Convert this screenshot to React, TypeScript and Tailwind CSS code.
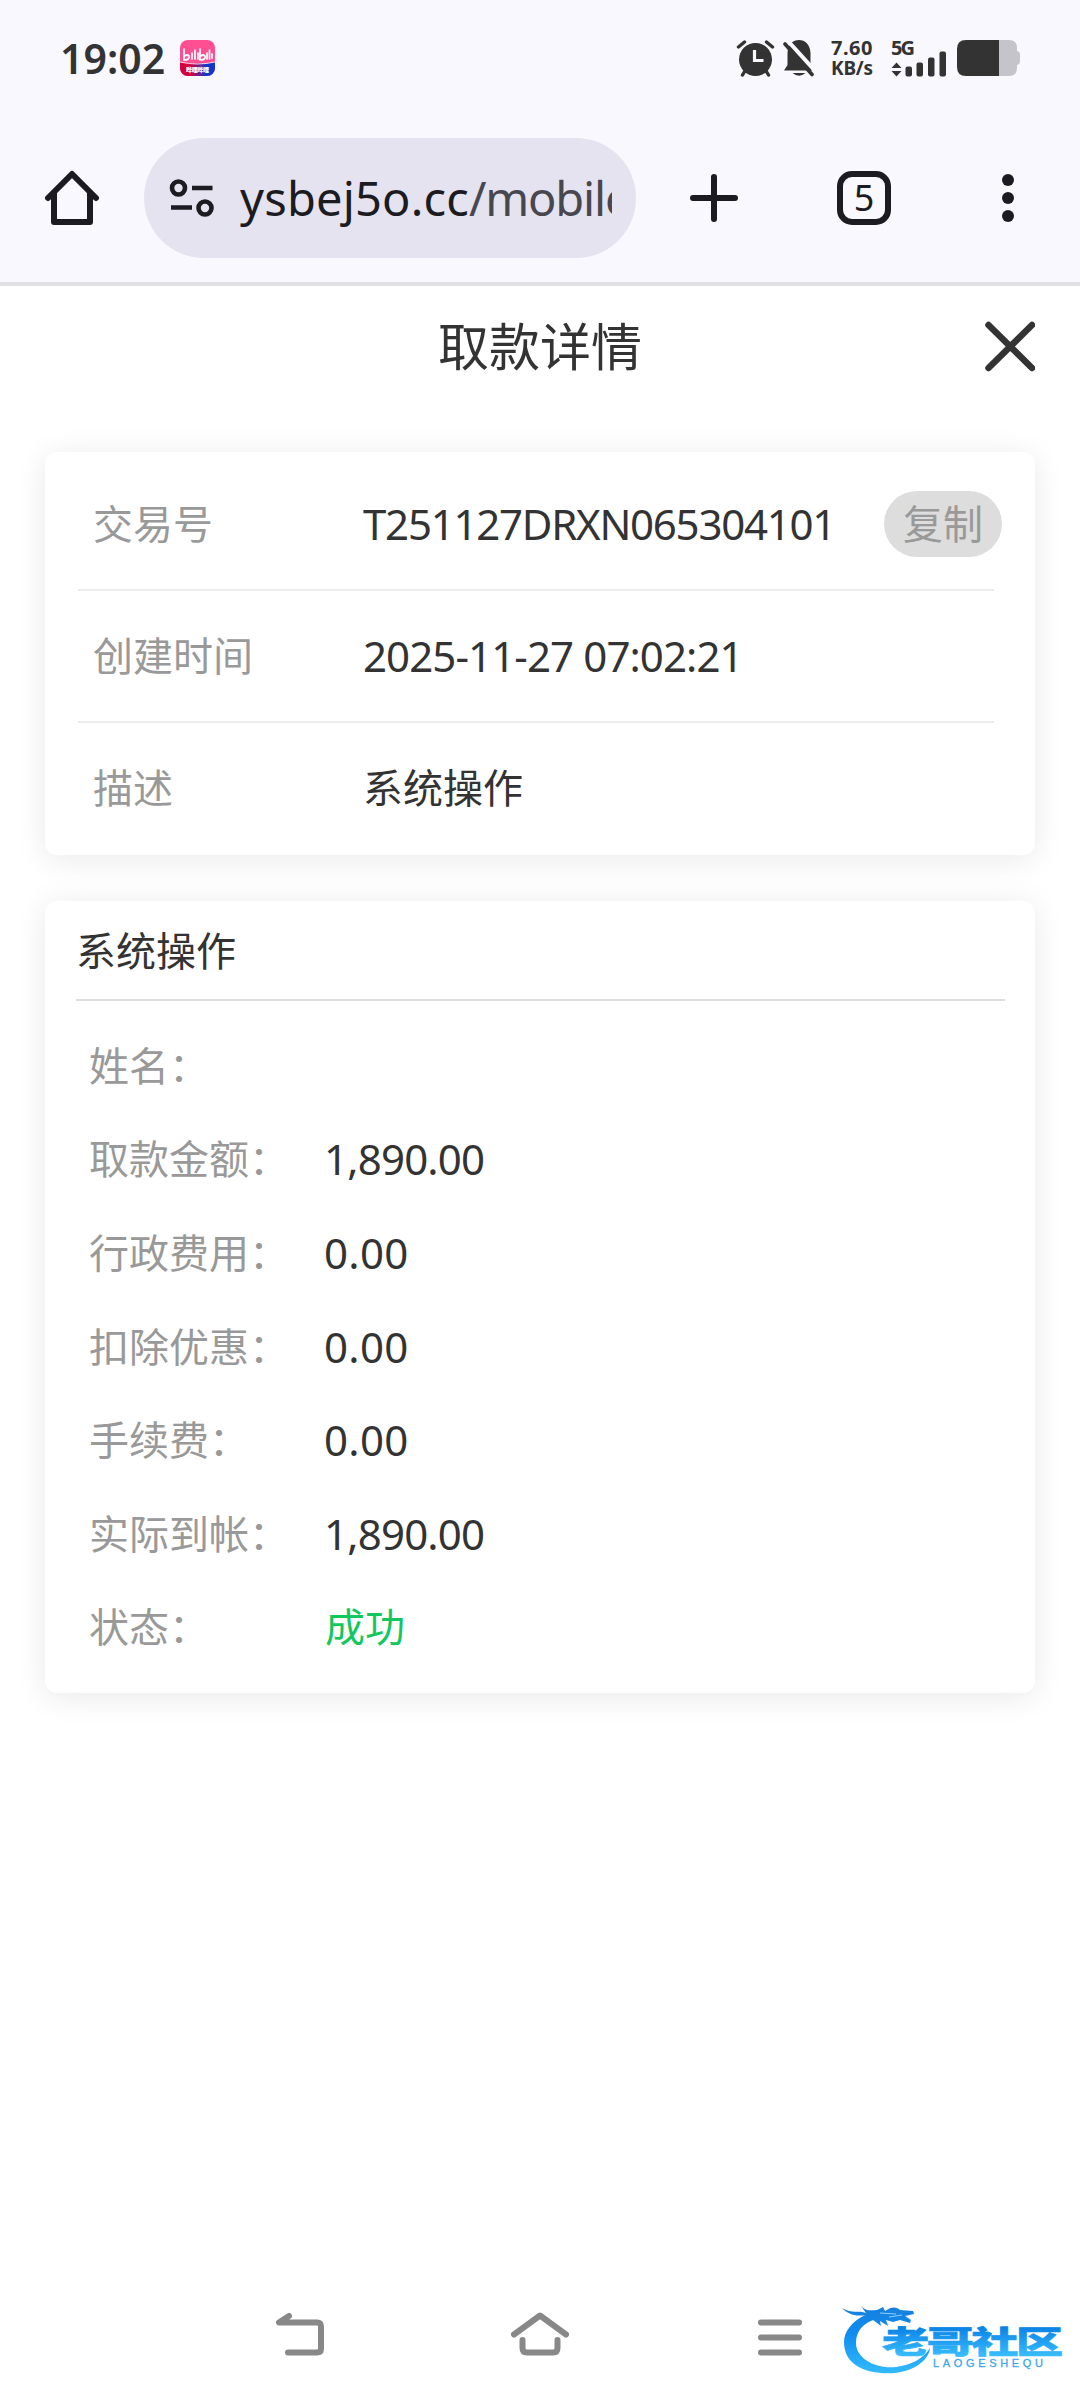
const infoRows = [
  {
    label: "交易号",
    value: "T251127DRXN065304101",
    style: "text-[42px] tracking-[-1.25px]",
    copy: true,
  },
  {
    label: "创建时间",
    value: "2025-11-27 07:02:21",
    style: "text-[42px] tracking-[-0.9px]",
  },
  { label: "描述", value: "系统操作", style: "" },
];

const detailRows = [
  { label: "姓名：", value: "", style: "" },
  { label: "取款金额：", value: "1,890.00", style: "text-[42px] tracking-[-0.8px]" },
  { label: "行政费用：", value: "0.00", style: "text-[42px] tracking-[0.3px]" },
  { label: "扣除优惠：", value: "0.00", style: "text-[42px] tracking-[0.3px]" },
  { label: "手续费：", value: "0.00", style: "text-[42px] tracking-[0.3px]" },
  { label: "实际到帐：", value: "1,890.00", style: "text-[42px] tracking-[-0.8px]" },
  { label: "状态：", value: "成功", style: "pl-px text-[#12c85e]" },
];

const StatusBar = () => (
  <div className="flex h-[116px] items-center pl-[60px] pr-[60px] text-[#333]">
    <span className="w-[105px] text-[41px] leading-none font-semibold">
      19:02
    </span>
    <svg className="ml-[15px] h-9 w-[35px] shrink-0" viewBox="0 0 35 36">
      <defs>
        <clipPath id="app-clip">
          <rect width="35" height="36" rx="8" />
        </clipPath>
        <linearGradient id="app-band">
          <stop offset="0.3" stopColor="#d3003f" />
          <stop offset="0.75" stopColor="#1238c8" />
        </linearGradient>
      </defs>
      <g clipPath="url(#app-clip)">
        <rect width="35" height="36" fill="#ff4f93" />
        <path d="M0 22Q17 25 35 22V36H0Z" fill="url(#app-band)" />
        <path d="M0 22Q17 26 35 22" stroke="#ffd5e6" strokeWidth="1" fill="none" />
        <g fill="none" stroke="#fff" strokeWidth="1.7" strokeLinecap="round">
          <path d="M4 9V20Q10 20 9 16Q7 14 5 16M12 13V19M15 10V19M18 13V19" />
          <path d="M20 9V20Q26 20 25 16Q23 14 21 16M27 13V19M29.5 10V19M32 14V18" />
        </g>
        <text
          x="6"
          y="32"
          fontSize="6"
          fontWeight="900"
          fill="#fff"
          textLength="23"
          fontFamily="Noto Sans CJK SC, sans-serif"
        >
          哔哩哔哩
        </text>
      </g>
    </svg>
    <div className="ml-auto flex items-center">
      <svg className="h-[38px] w-[40px]" viewBox="0 0 40 38" fill="none" stroke="#333">
        <circle cx="19.5" cy="20.5" r="16.5" fill="#333" stroke="none" />
        <path
          d="M2.5 8L8.5 3M30.5 3L36.5 8M6.5 36L9.5 31M32.5 36L29.5 31"
          strokeWidth="3.4"
          strokeLinecap="round"
        />
        <path d="M18.5 11V21.5H27.5" stroke="#f9f8ff" strokeWidth="3.2" />
      </svg>
      <svg className="ml-[7px] h-[38px] w-[32px]" viewBox="0 0 32 38">
        <path
          d="M1 31.5L4.5 26V14C5 5 10 1 16 1S27 5 27.5 14V24L31 31.5Z"
          fill="#333"
        />
        <path d="M9.5 34H22.5Q16 39.5 9.5 34Z" fill="#333" />
        <path d="M4 1L34 34" stroke="#f9f8ff" strokeWidth="4" />
        <path d="M2 5L29 35.5" stroke="#333" strokeWidth="3.6" strokeLinecap="round" />
      </svg>
      <div className="ml-4 flex w-[44px] flex-col text-[20px] leading-[21px] font-bold">
        <span className="tracking-[0.5px]">7.60</span>
        <span className="text-[19px] tracking-[-0.2px]">KB/s</span>
      </div>
      <svg className="ml-4 h-[38px] w-[56px] overflow-visible" viewBox="0 0 56 38" fill="#333">
        <text x="0" y="16" fontSize="20" fontWeight="700" textLength="24">
          5G
        </text>
        <path d="M0.5 29L5.5 23.5L10.5 29ZM0.5 32L5.5 37.5L10.5 32Z" />
        <rect x="14.5" y="27.5" width="6.5" height="10" rx="2" />
        <rect x="25.5" y="23.5" width="6.5" height="14" rx="2" />
        <rect x="37" y="18.5" width="6.5" height="19" rx="2" />
        <rect x="48.5" y="12.5" width="6.5" height="25" rx="2" />
      </svg>
      <svg className="ml-[10px] h-9 w-[63px]" viewBox="0 0 63 36">
        <path
          d="M42 0H52Q60 0 60 8V11Q63 11.5 63 15V21Q63 24.5 60 25V28Q60 36 52 36H42Z"
          fill="#c5c4ca"
        />
        <path d="M42 0H9Q0 0 0 9V27Q0 36 9 36H42Z" fill="#333" />
      </svg>
    </div>
  </div>
);

const BrowserBar = () => (
  <div className="flex h-[166px] items-center pb-[2px] pl-[44px] text-[#1b1b21]">
    <svg
      className="h-14 w-14 shrink-0"
      viewBox="0 0 56 56"
      fill="none"
      stroke="#1b1b21"
      strokeWidth="6"
      strokeLinecap="round"
      strokeLinejoin="round"
    >
      <path d="M4 28L28 4L52 28" />
      <path d="M10 24V52H46V24" />
    </svg>
    <div className="ml-[44px] flex h-[120px] w-[492px] shrink-0 items-center rounded-full bg-[#e4e3ef] pl-[25px] pr-6">
      <svg
        className="h-[40px] w-[45px] shrink-0"
        viewBox="0 0 45 40"
        fill="none"
        stroke="#1b1b21"
      >
        <circle cx="9.5" cy="10" r="6.5" strokeWidth="4.6" />
        <circle cx="36" cy="30" r="6.5" strokeWidth="4.6" />
        <path d="M23 10H43.5M2 29.5H23" strokeWidth="4.4" />
      </svg>
      <div className="ml-[26px] w-[372px] overflow-hidden text-[47px] leading-[72px] tracking-[0.2px] whitespace-nowrap">
        ysbej5o.cc
        <span className="tracking-[-1.2px] text-[#484750]">/mobile</span>
      </div>
    </div>
    <svg className="ml-[53px] h-[50px] w-[50px] shrink-0" viewBox="0 0 50 50">
      <path
        d="M25 4V46M4 25H46"
        stroke="#1b1b21"
        strokeWidth="6"
        strokeLinecap="round"
      />
    </svg>
    <div className="ml-[98px] flex h-[54px] w-[54px] shrink-0 items-center justify-center rounded-[15px] border-[6px] border-[#1b1b21] text-[36px] leading-none">
      5
    </div>
    <div className="ml-[111px] flex flex-col gap-[6px]">
      <i className="size-3 rounded-full bg-[#1b1b21]" />
      <i className="size-3 rounded-full bg-[#1b1b21]" />
      <i className="size-3 rounded-full bg-[#1b1b21]" />
    </div>
  </div>
);

const InfoCard = () => (
  <section className="mt-[46px] rounded-xl bg-white px-[33px] pt-[7px] shadow-[0_4px_32px_rgba(0,0,0,0.09)]">
    {infoRows.map((row, i) => (
      <div
        key={row.label}
        className={`mr-2 flex h-[132px] items-center pl-[15px] ${
          i < 2 ? "border-b-2 border-[#ececec]" : "pb-[3px]"
        }`}
      >
        <span className="w-[270px] shrink-0 text-[#999]">{row.label}</span>
        <span className={`w-[480px] shrink-0 whitespace-nowrap ${row.style}`}>
          {row.value}
        </span>
        {row.copy && (
          <button className="ml-[41px] h-[66px] w-[118px] shrink-0 rounded-full bg-[#ddd] text-[#999]">
            复制
          </button>
        )}
      </div>
    ))}
  </section>
);

const DetailCard = () => (
  <section className="mt-[46px] h-[792px] rounded-xl bg-white pr-[30px] pl-[31px] shadow-[0_4px_32px_rgba(0,0,0,0.09)]">
    <h2 className="h-[100px] border-b-2 border-[#ddd] leading-[100px]">
      系统操作
    </h2>
    <div className="pt-[18px] pl-[13px]">
      {detailRows.map((row) => (
        <div key={row.label} className="flex h-[93.6px] items-center">
          <span className="w-[235px] shrink-0 text-[#999]">{row.label}</span>
          <span className={row.style}>{row.value}</span>
        </div>
      ))}
    </div>
  </section>
);

const SystemNav = () => (
  <nav className="mt-auto flex h-[126px] items-center pl-[274px]">
    <svg
      className="h-[50px] w-[530px]"
      viewBox="274 2312 530 50"
      fill="none"
      stroke="#888"
      strokeWidth="6"
      strokeLinecap="round"
      strokeLinejoin="round"
    >
      <path d="M289 2316L279 2322.5H317Q321 2322.5 321 2326.5V2348.5Q321 2352.5 317 2352.5H288" />
      <path d="M514 2334.5L540 2315.5L566 2334.5M522.5 2340V2348Q522.5 2352.5 527 2352.5H553Q557.5 2352.5 557.5 2348V2340" />
      <path d="M761 2322.5H799M761 2337.5H799M761 2352.5H799" />
    </svg>
  </nav>
);

const CommunityLogo = () => (
  <svg className="absolute right-0 bottom-0 h-[120px] w-[260px]" viewBox="0 0 260 120">
    <defs>
      <linearGradient id="logo-ink" x1="0" y1="28" x2="0" y2="92" gradientUnits="userSpaceOnUse">
        <stop offset="0" stopColor="#1780dc" />
        <stop offset="0.4" stopColor="#0e8df0" />
        <stop offset="1" stopColor="#31b9fb" />
      </linearGradient>
      <linearGradient id="logo-text" x1="0" y1="0" x2="0" y2="1">
        <stop offset="0.25" stopColor="#0b84e6" />
        <stop offset="0.9" stopColor="#3bc0ff" />
      </linearGradient>
    </defs>
    <g fill="url(#logo-ink)">
      <path d="M45 35C31 42 24 52 24 62C24 87 49 95 75 93C94 91 109 80 110 68C103 79 91 85 76 87C56 89 36 79 36 63C36 51 43 43 56 39Z" />
      <path d="M22 28C32 34 39 30 46 33L41 26C47 32 52 30 57 30L63 27L65 31C72 26 77 27 80 30L93 31L94 34L85 36L91 40L90 43L80 40L73 42L66 40L68 46L60 41L61 46L53 40L42 39L46 35C35 37 28 34 22 28Z" />
    </g>
    <path d="M60 33L76 34M69 37L82 35" stroke="#8fd0ff" strokeWidth="1" />
    <text
      transform="translate(62 72.5) scale(1.24 .82)"
      fontSize="38"
      fontWeight="900"
      fill="url(#logo-text)"
      stroke="url(#logo-text)"
      strokeWidth="0.8"
      textLength="146"
      fontFamily="Noto Sans CJK SC, sans-serif"
    >
      老哥社区
    </text>
    <text
      x="113"
      y="86.5"
      fontSize="11"
      textLength="110"
      fill="#3aa7ee"
      stroke="#3aa7ee"
      strokeWidth="0.3"
      fontFamily="Liberation Sans, sans-serif"
    >
      LAOGESHEQU
    </text>
  </svg>
);

export default function App() {
  return (
    <div className="relative flex h-[2400px] w-[1080px] flex-col overflow-hidden bg-white font-['Noto_Sans','Noto_Sans_CJK_SC',sans-serif] text-[40px] leading-none text-[#333]">
      <header className="h-[286px] shrink-0 border-b-4 border-[#e1e1e4] bg-[#f9f8ff]">
        <StatusBar />
        <BrowserBar />
      </header>
      <main className="px-[45px]">
        <div className="grid h-[120px] grid-cols-[1fr_auto_1fr] items-center">
          <h1 className="col-start-2 text-[51px]">取款详情</h1>
          <svg className="size-14 justify-self-end" viewBox="0 0 56 56">
            <path
              d="M9.5 7L53 50M53 7L9.5 50"
              stroke="#333"
              strokeWidth="6.5"
              strokeLinecap="round"
            />
          </svg>
        </div>
        <InfoCard />
        <DetailCard />
      </main>
      <SystemNav />
      <CommunityLogo />
    </div>
  );
}
